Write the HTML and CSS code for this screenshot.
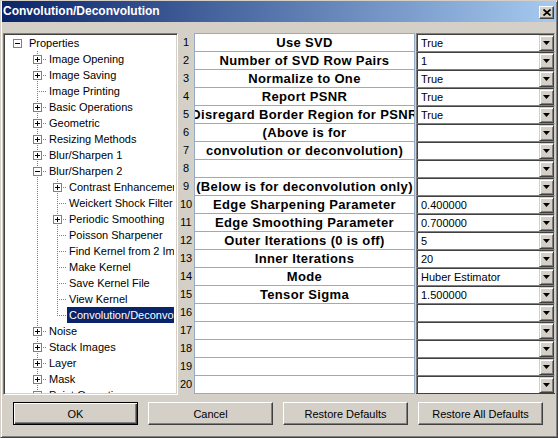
FILE: index.html
```html
<!DOCTYPE html>
<html lang="en">
<head>
    <meta charset="UTF-8">
    <title>Convolution/Deconvolution</title>
    <link rel="stylesheet" href="styles.css">
</head>
<body>
    <div class="window">
        <div class="titlebar">
            <span class="title">Convolution/Deconvolution</span>
            <span class="close">
                <svg width="8" height="7" viewBox="0 0 8 7"><path d="M0.5 0.5 L7.5 6.5 M7.5 0.5 L0.5 6.5" stroke="#000" stroke-width="1.7" fill="none"/></svg>
            </span>
        </div>

        <div class="main">
            <div class="tree">
                <div class="tree-clip">
                    <div class="node"><span class="cell"><span class="box minus"></span></span><span class="label">Properties</span></div>
                    <div class="node"><span class="cell"></span><span class="cell tee"><span class="box plus"></span></span><span class="label">Image Opening</span></div>
                    <div class="node"><span class="cell"></span><span class="cell tee"><span class="box plus"></span></span><span class="label">Image Saving</span></div>
                    <div class="node"><span class="cell"></span><span class="cell tee"></span><span class="label">Image Printing</span></div>
                    <div class="node"><span class="cell"></span><span class="cell tee"><span class="box plus"></span></span><span class="label">Basic Operations</span></div>
                    <div class="node"><span class="cell"></span><span class="cell tee"><span class="box plus"></span></span><span class="label">Geometric</span></div>
                    <div class="node"><span class="cell"></span><span class="cell tee"><span class="box plus"></span></span><span class="label">Resizing Methods</span></div>
                    <div class="node"><span class="cell"></span><span class="cell tee"><span class="box plus"></span></span><span class="label">Blur/Sharpen 1</span></div>
                    <div class="node"><span class="cell"></span><span class="cell tee"><span class="box minus"></span></span><span class="label">Blur/Sharpen 2</span></div>
                    <div class="node"><span class="cell"></span><span class="cell pipe"></span><span class="cell tee"><span class="box plus"></span></span><span class="label">Contrast Enhancement</span></div>
                    <div class="node"><span class="cell"></span><span class="cell pipe"></span><span class="cell tee"></span><span class="label">Weickert Shock Filter</span></div>
                    <div class="node"><span class="cell"></span><span class="cell pipe"></span><span class="cell tee"><span class="box plus"></span></span><span class="label">Periodic Smoothing</span></div>
                    <div class="node"><span class="cell"></span><span class="cell pipe"></span><span class="cell tee"></span><span class="label">Poisson Sharpener</span></div>
                    <div class="node"><span class="cell"></span><span class="cell pipe"></span><span class="cell tee"></span><span class="label">Find Kernel from 2 Images</span></div>
                    <div class="node"><span class="cell"></span><span class="cell pipe"></span><span class="cell tee"></span><span class="label">Make Kernel</span></div>
                    <div class="node"><span class="cell"></span><span class="cell pipe"></span><span class="cell tee"></span><span class="label">Save Kernel File</span></div>
                    <div class="node"><span class="cell"></span><span class="cell pipe"></span><span class="cell tee"></span><span class="label">View Kernel</span></div>
                    <div class="node"><span class="cell"></span><span class="cell pipe"></span><span class="cell elbow"></span><span class="label selected">Convolution/Deconvolution</span></div>
                    <div class="node"><span class="cell"></span><span class="cell tee"><span class="box plus"></span></span><span class="label">Noise</span></div>
                    <div class="node"><span class="cell"></span><span class="cell tee"><span class="box plus"></span></span><span class="label">Stack Images</span></div>
                    <div class="node"><span class="cell"></span><span class="cell tee"><span class="box plus"></span></span><span class="label">Layer</span></div>
                    <div class="node"><span class="cell"></span><span class="cell tee"><span class="box plus"></span></span><span class="label">Mask</span></div>
                    <div class="node"><span class="cell"></span><span class="cell tee"><span class="box plus"></span></span><span class="label">Point Operations</span></div>
                </div>
            </div>

            <div class="nums">
                <div class="num">1</div><div class="num">2</div><div class="num">3</div><div class="num">4</div>
                <div class="num">5</div><div class="num">6</div><div class="num">7</div><div class="num">8</div>
                <div class="num">9</div><div class="num">10</div><div class="num">11</div><div class="num">12</div>
                <div class="num">13</div><div class="num">14</div><div class="num">15</div><div class="num">16</div>
                <div class="num">17</div><div class="num">18</div><div class="num">19</div><div class="num">20</div>
            </div>

            <div class="labels">
                <div class="lab"><span>Use SVD</span></div>
                <div class="lab"><span>Number of SVD Row Pairs</span></div>
                <div class="lab"><span>Normalize to One</span></div>
                <div class="lab"><span>Report PSNR</span></div>
                <div class="lab"><span>Disregard Border Region for PSNR</span></div>
                <div class="lab"><span>(Above is for</span></div>
                <div class="lab"><span>convolution or deconvolution)</span></div>
                <div class="lab"><span></span></div>
                <div class="lab"><span>(Below is for deconvolution only)</span></div>
                <div class="lab"><span>Edge Sharpening Parameter</span></div>
                <div class="lab"><span>Edge Smoothing Parameter</span></div>
                <div class="lab"><span>Outer Iterations (0 is off)</span></div>
                <div class="lab"><span>Inner Iterations</span></div>
                <div class="lab"><span>Mode</span></div>
                <div class="lab"><span>Tensor Sigma</span></div>
                <div class="lab"><span></span></div>
                <div class="lab"><span></span></div>
                <div class="lab"><span></span></div>
                <div class="lab"><span></span></div>
                <div class="lab"><span></span></div>
            </div>

            <div class="values">
                <div class="combo"><span class="combo-text">True</span><span class="drop"></span></div>
                <div class="combo"><span class="combo-text">1</span><span class="drop"></span></div>
                <div class="combo"><span class="combo-text">True</span><span class="drop"></span></div>
                <div class="combo"><span class="combo-text">True</span><span class="drop"></span></div>
                <div class="combo"><span class="combo-text">True</span><span class="drop"></span></div>
                <div class="combo"><span class="combo-text"></span><span class="drop"></span></div>
                <div class="combo"><span class="combo-text"></span><span class="drop"></span></div>
                <div class="combo"><span class="combo-text"></span><span class="drop"></span></div>
                <div class="combo"><span class="combo-text"></span><span class="drop"></span></div>
                <div class="combo"><span class="combo-text">0.400000</span><span class="drop"></span></div>
                <div class="combo"><span class="combo-text">0.700000</span><span class="drop"></span></div>
                <div class="combo"><span class="combo-text">5</span><span class="drop"></span></div>
                <div class="combo"><span class="combo-text">20</span><span class="drop"></span></div>
                <div class="combo"><span class="combo-text">Huber Estimator</span><span class="drop"></span></div>
                <div class="combo"><span class="combo-text">1.500000</span><span class="drop"></span></div>
                <div class="combo"><span class="combo-text"></span><span class="drop"></span></div>
                <div class="combo"><span class="combo-text"></span><span class="drop"></span></div>
                <div class="combo"><span class="combo-text"></span><span class="drop"></span></div>
                <div class="combo"><span class="combo-text"></span><span class="drop"></span></div>
                <div class="combo"><span class="combo-text"></span><span class="drop"></span></div>
            </div>
        </div>

        <div class="buttons">
            <button class="btn default">OK</button>
            <button class="btn">Cancel</button>
            <button class="btn">Restore Defaults</button>
            <button class="btn">Restore All Defaults</button>
        </div>
    </div>
</body>
</html>
```

FILE: styles.css
```css
body {
    margin: 0;
    background-color: #d4d0c8;
    font-family: 'Liberation Sans', Arial, sans-serif;
    font-size: 11px;
    color: #000;
}
.window {
    width: 558px;
    height: 438px;
    box-sizing: border-box;
    background-color: #d4d0c8;
    border-top: 1px solid #d4d0c8;
    border-left: 1px solid #d4d0c8;
    border-right: 1px solid #404040;
    border-bottom: 1px solid #404040;
    box-shadow: inset 1px 1px #fff, inset -1px -1px #808080;
    padding: 0 1px 1px 1px;
}
.titlebar {
    display: flex;
    height: 21px;
    padding: 0 2px 0 1px;
    background: linear-gradient(to right, #0a246a, #a6caf0);
}
.title {
    flex: 1;
    color: #fff;
    font-weight: bold;
    font-size: 12px;
    line-height: 21px;
}
.close {
    display: flex;
    align-items: center;
    justify-content: center;
    width: 15px;
    height: 13px;
    margin-top: 5px;
    box-sizing: border-box;
    background-color: #d4d0c8;
    border-top: 1px solid #fff;
    border-left: 1px solid #fff;
    border-right: 1px solid #404040;
    border-bottom: 1px solid #404040;
    box-shadow: inset -1px -1px #808080;
}

.main {
    display: flex;
    align-items: flex-start;
    margin: 11px 0 0 1px;
}

/* tree */
.tree {
    width: 175px;
    height: 362px;
    box-sizing: border-box;
    padding: 1px;
    background-color: #fff;
    border-top: 1px solid #808080;
    border-left: 1px solid #808080;
    border-right: 1px solid #fff;
    border-bottom: 1px solid #fff;
    box-shadow: inset 1px 1px #404040, inset -1px -1px #d4d0c8;
}
.tree-clip {
    height: 100%;
    margin-right: 2px;
    padding-left: 2px;
    overflow: hidden;
}
.node {
    display: flex;
    height: 16px;
    line-height: 16px;
    white-space: nowrap;
}
.cell {
    flex: none;
    width: 20px;
    height: 16px;
    background-repeat: no-repeat;
}
.pipe {
    background-image: repeating-linear-gradient(to bottom, #808080 0 1px, transparent 1px 2px);
    background-size: 1px 16px;
    background-position: 10px 0;
}
.tee, .elbow {
    background-image:
        repeating-linear-gradient(to bottom, #808080 0 1px, transparent 1px 2px),
        repeating-linear-gradient(to right, #808080 0 1px, transparent 1px 2px);
    background-size: 1px 16px, 10px 1px;
    background-position: 10px 0, 10px 8px;
}
.elbow {
    background-size: 1px 9px, 10px 1px;
}
.box {
    display: block;
    width: 9px;
    height: 9px;
    box-sizing: border-box;
    margin: 4px 0 0 6px;
    border: 1px solid #808080;
    background-color: #fff;
    background-repeat: no-repeat;
    background-position: center;
}
.plus {
    background-image: linear-gradient(#000, #000), linear-gradient(#000, #000);
    background-size: 5px 1px, 1px 5px;
}
.minus {
    background-image: linear-gradient(#000, #000);
    background-size: 5px 1px;
}
.label {
    flex: 0 1 auto;
    min-width: 0;
    overflow: hidden;
    padding: 0 2px;
}
.label.selected {
    background-color: #0a246a;
    color: #fff;
}

/* grid */
.nums {
    width: 16px;
    flex: none;
}
.num {
    height: 18px;
    line-height: 18px;
    text-align: center;
}
.labels {
    width: 221px;
    flex: none;
    box-sizing: border-box;
    background-color: #fff;
    border: 1px solid #98abc4;
    border-bottom: none;
}
.lab {
    display: flex;
    justify-content: center;
    height: 18px;
    box-sizing: border-box;
    border-bottom: 1px solid #98abc4;
    overflow: hidden;
    white-space: nowrap;
    line-height: 17px;
    font-weight: bold;
    font-size: 13px;
    letter-spacing: 0.35px;
}
.lab span {
    flex: none;
}
.values {
    width: 139px;
    flex: none;
    margin-left: 1px;
    border-bottom: 1px solid #404040;
}
.combo {
    display: flex;
    height: 18px;
    box-sizing: border-box;
    padding: 1px 0 0 1px;
    background-color: #fff;
    border-top: 1px solid #808080;
    border-left: 1px solid #808080;
    border-right: 1px solid #d4d0c8;
    box-shadow: inset 1px 1px #404040;
}
.combo-text {
    flex: 1;
    padding-left: 3px;
    line-height: 16px;
}
.drop {
    display: flex;
    align-items: center;
    justify-content: center;
    width: 15px;
    height: 16px;
    box-sizing: border-box;
    background-color: #d4d0c8;
    border-top: 1px solid #d4d0c8;
    border-left: 1px solid #d4d0c8;
    border-right: 1px solid #404040;
    border-bottom: 1px solid #404040;
    box-shadow: inset 1px 1px #fff, inset -1px -1px #808080;
}
.drop::after {
    content: "";
    width: 7px;
    height: 4px;
    background-color: #000;
    clip-path: polygon(0 0, 100% 0, 50% 100%);
}

/* buttons */
.buttons {
    display: flex;
    gap: 10px;
    margin-top: 7px;
    padding-left: 11px;
}
.btn {
    width: 125px;
    height: 23px;
    box-sizing: border-box;
    padding: 0;
    font: inherit;
    color: #000;
    background-color: #d4d0c8;
    border-top: 1px solid #fff;
    border-left: 1px solid #fff;
    border-right: 1px solid #404040;
    border-bottom: 1px solid #404040;
    box-shadow: inset -1px -1px #808080;
}
.btn.default {
    border: 1px solid #000;
    box-shadow: inset 1px 1px #fff, inset -1px -1px #404040, inset -2px -2px #808080;
}
```
